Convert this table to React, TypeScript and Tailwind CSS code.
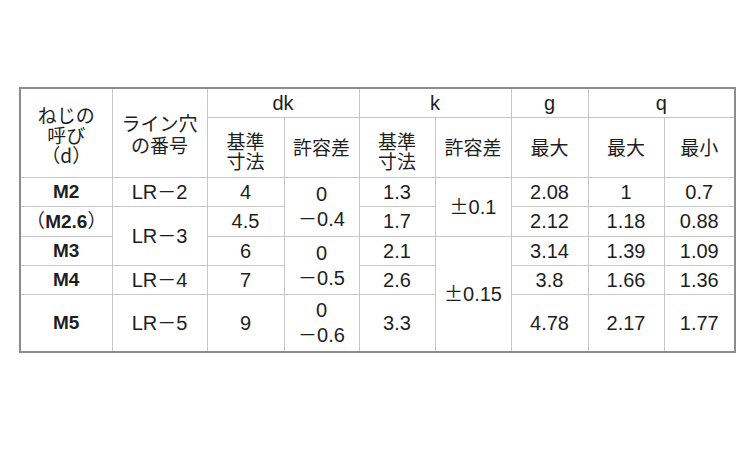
import React from 'react';

// 寸法表 (ねじの呼び / ライン穴 / dk / k / g / q)
const td = 'border border-[#c6c6c6] p-0 text-center align-middle leading-[22px]';
const jp = "font-['Noto_Sans_CJK_JP',sans-serif] text-[19px]";

type Row = {
  d: string;
  line?: { text: string; span: number };
  dk: string;
  dkTol?: { text: [string, string]; span: number };
  k: string;
  kTol?: { text: string; span: number };
  g: string;
  qMax: string;
  qMin: string;
  h: string;
};

const rows: Row[] = [
  { d: 'M2', line: { text: '2', span: 1 }, dk: '4', dkTol: { text: ['0', '0.4'], span: 2 }, k: '1.3', kTol: { text: '0.1', span: 2 }, g: '2.08', qMax: '1', qMin: '0.7', h: 'h-[29px]' },
  { d: 'M2.6', line: { text: '3', span: 2 }, dk: '4.5', k: '1.7', g: '2.12', qMax: '1.18', qMin: '0.88', h: 'h-[30px]' },
  { d: 'M3', dk: '6', dkTol: { text: ['0', '0.5'], span: 2 }, k: '2.1', kTol: { text: '0.15', span: 3 }, g: '3.14', qMax: '1.39', qMin: '1.09', h: 'h-[29px]' },
  { d: 'M4', line: { text: '4', span: 1 }, dk: '7', k: '2.6', g: '3.8', qMax: '1.66', qMin: '1.36', h: 'h-[29px]' },
  { d: 'M5', line: { text: '5', span: 1 }, dk: '9', dkTol: { text: ['0', '0.6'], span: 1 }, k: '3.3', g: '4.78', qMax: '2.17', qMin: '1.77', h: 'h-[58px]' },
];

const Dash = () => <span className={jp}>－</span>;

export default function App() {
  return (
    <div className="w-[750px] h-[450px] bg-white pt-[87px] pl-[19px] text-[#1e1e1e] font-['Liberation_Sans','Noto_Sans_CJK_JP',sans-serif] text-[20px]">
      <table className="table-fixed border-collapse border-2 border-[#8c8c8c] w-[715px]">
        <colgroup>
          <col className="w-[92px]" />
          <col className="w-[95px]" />
          <col className="w-[77px]" />
          <col className="w-[75px]" />
          <col className="w-[76px]" />
          <col className="w-[76px]" />
          <col className="w-[77px]" />
          <col className="w-[76px]" />
          <col className="w-[71px]" />
        </colgroup>
        <thead>
          <tr className="h-[29px]">
            <td rowSpan={2} className={`${td} ${jp} !leading-[20px] pt-[5px]`}>
              ねじの<br />呼び<br />（d）
            </td>
            <td rowSpan={2} className={`${td} ${jp} pt-[3px]`}>
              ライン穴<br />の番号
            </td>
            <td colSpan={2} className={td}>dk</td>
            <td colSpan={2} className={td}>k</td>
            <td className={td}>g</td>
            <td colSpan={2} className={td}>q</td>
          </tr>
          <tr className="h-[60px]">
            <td className={`${td} ${jp} !leading-[20px] pt-[7px]`}>基準<br />寸法</td>
            <td className={`${td} ${jp}`}>許容差</td>
            <td className={`${td} ${jp} !leading-[20px] pt-[7px]`}>基準<br />寸法</td>
            <td className={`${td} ${jp}`}>許容差</td>
            <td className={`${td} ${jp}`}>最大</td>
            <td className={`${td} ${jp}`}>最大</td>
            <td className={`${td} ${jp}`}>最小</td>
          </tr>
        </thead>
        <tbody>
          {rows.map((r) => (
            <tr key={r.d} className={r.h}>
              <td className={`${td} font-bold text-[19px]`}>
                {r.d === 'M2.6' ? (
                  <>
                    <span className="font-normal font-['Noto_Sans_CJK_JP',sans-serif]">（</span>
                    {r.d}
                    <span className="font-normal font-['Noto_Sans_CJK_JP',sans-serif]">）</span>
                  </>
                ) : (
                  r.d
                )}
              </td>
              {r.line && (
                <td rowSpan={r.line.span} className={td}>
                  LR<Dash />{r.line.text}
                </td>
              )}
              <td className={td}>{r.dk}</td>
              {r.dkTol && (
                <td rowSpan={r.dkTol.span} className={`${td} !leading-[24px]`}>
                  {r.dkTol.text[0]}
                  <br />
                  <Dash />
                  {r.dkTol.text[1]}
                </td>
              )}
              <td className={td}>{r.k}</td>
              {r.kTol && (
                <td rowSpan={r.kTol.span} className={td}>
                  <span className={jp}>±</span>
                  {r.kTol.text}
                </td>
              )}
              <td className={td}>{r.g}</td>
              <td className={td}>{r.qMax}</td>
              <td className={td}>{r.qMin}</td>
            </tr>
          ))}
        </tbody>
      </table>
    </div>
  );
}
